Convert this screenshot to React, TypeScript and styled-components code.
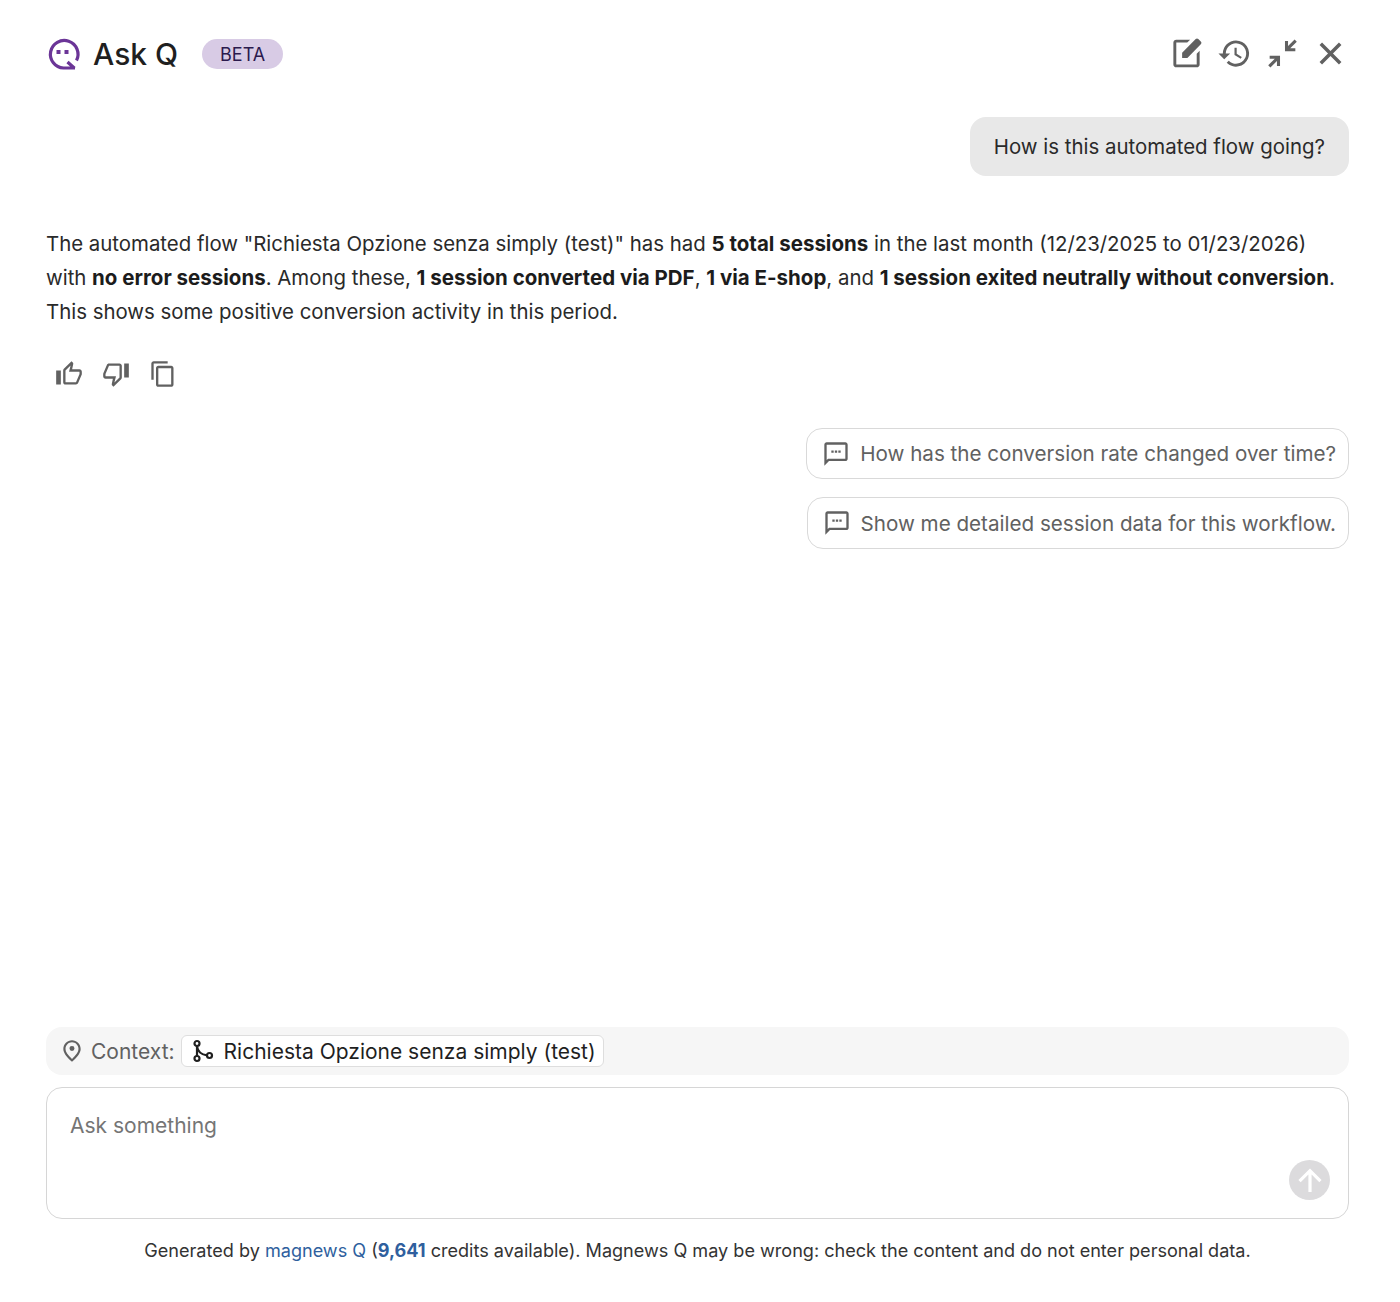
import React from 'react';
import styled, {createGlobalStyle} from 'styled-components';

const GlobalStyle = createGlobalStyle`
  html, body {
    margin: 0;
    padding: 0;
    background: #fff;
    font-family: Inter, "Liberation Sans", sans-serif;
    color: #1f1f1f;
  }
`;

const Page = styled.div`
  box-sizing: border-box;
  height: 1302px;
  padding: 24px 51px 0 46px;
  display: flex;
  flex-direction: column;
`;

const Header = styled.header`
  display: flex;
  align-items: center;
  justify-content: space-between;
  height: 60px;
`;

const Brand = styled.div`
  display: flex;
  align-items: center;
`;

const Title = styled.h1`
  margin: 0 24px 0 11px;
  font-size: 30px;
  font-weight: 500;
  line-height: 36px;
  color: #1f1f1f;
`;

const Badge = styled.span`
  display: inline-flex;
  align-items: center;
  justify-content: center;
  width: 81px;
  height: 30px;
  border-radius: 15px;
  background: #d8cbe5;
  color: #2b1a4d;
  font-size: 18px;
`;

const Tools = styled.div`
  display: flex;
  align-items: center;
  gap: 13px;
  margin: 0 1px 2px 0;
`;

const IconSlot = styled.span<{$size?: number; $color?: string}>`
  display: inline-flex;
  width: ${props => props.$size ?? 35}px;
  height: ${props => props.$size ?? 35}px;
  color: ${props => props.$color ?? '#616161'};
  flex: none;

  svg {
    width: 100%;
    height: 100%;
    display: block;
    fill: currentColor;
  }
`;

const UserRow = styled.div`
  display: flex;
  justify-content: flex-end;
  margin-top: 33px;
`;

const UserBubble = styled.div`
  background: #e8e8e8;
  border-radius: 16px;
  padding: 13px 24px;
  font-size: 20.45px;
  line-height: 33px;
  color: #2a2a2a;
`;

const Answer = styled.p`
  max-width: 1295px;
  margin: 51px 0 0;
  font-size: 20.4px;
  line-height: 34px;
  color: #2a2a2a;

  b {
    font-size: 20.5px;
    font-weight: 700;
    color: #1c1c1c;
  }
`;

const Feedback = styled.div`
  display: flex;
  gap: 19px;
  margin: 31px 0 0 9px;
`;

const Suggestions = styled.div`
  display: flex;
  flex-direction: column;
  align-items: flex-end;
  gap: 18px;
  margin-top: 40px;
`;

const Suggestion = styled.button`
  display: flex;
  align-items: center;
  gap: 10px;
  height: 51.4px;
  box-sizing: border-box;
  padding: 0 12px 0 15px;
  background: #fff;
  border: 1px solid #d9d9d9;
  border-radius: 16px;
  font: inherit;
  font-size: 20.62px;
  color: #616161;
`;

const Spacer = styled.div`
  flex: 1;
`;

const ContextBar = styled.div`
  display: flex;
  align-items: center;
  height: 48px;
  padding: 0 14px 0 13px;
  border-radius: 16px;
  background: #f6f6f6;
  font-size: 21px;
  color: #616161;
`;

const ContextLabel = styled.span`
  margin: 0 6px 0 6px;
`;

const ContextChip = styled.span`
  display: inline-flex;
  align-items: center;
  gap: 7px;
  height: 32px;
  box-sizing: border-box;
  padding: 0 7px 0 9px;
  background: #fff;
  border: 1px solid #dedede;
  border-radius: 6px;
  color: #1f1f1f;
`;

const InputBox = styled.div`
  position: relative;
  box-sizing: border-box;
  height: 132px;
  margin-top: 12px;
  padding: 22px 23px;
  border: 1px solid #d6d6d6;
  border-radius: 16px;
  font-size: 21px;
  line-height: 32px;
  color: #757575;
`;

const SendButton = styled.span`
  position: absolute;
  right: 18px;
  bottom: 18px;
  width: 41px;
  height: 40px;
  border-radius: 50%;
  background: #dcdbdd;
  color: #fff;
  display: flex;
  align-items: center;
  justify-content: center;
`;

const Footer = styled.footer`
  margin: 19px 0 40px;
  text-align: center;
  font-size: 18.08px;
  line-height: 24px;
  color: #333;

  a {
    color: #2f5f9e;
    text-decoration: none;
  }

  b {
    color: #2f5f9e;
    font-weight: 700;
  }
`;

const Icon: React.FC<{d: string; size?: number; color?: string}> = ({d, size, color}) => (
    <IconSlot $size={size} $color={color}>
        <svg viewBox="0 0 24 24"><path d={d} /></svg>
    </IconSlot>
);

// icon paths, 24 grid
const EDIT = 'M5 21.5c-1.100 0-2-.9-2-2V4.500c0-1.100.9-2 2-2h9.500l-2 2H5v15h14v-7.400l2-2v9.400c0 1.100-.9 2-2 2H5zM9 15v-3.600L18.300 2.100c.6-.6 1.200-.6 1.800 0l1.700 1.700c.6.6.6 1.200 0 1.800L12.600 15H9z';
const HISTORY = 'M13 3a9 9 0 0 0-9 9H1l3.900 3.900.1.1 4-4H6a7 7 0 1 1 2.050 4.950l-1.420 1.420A9 9 0 1 0 13 3zm-1 5v5l4.280 2.540.72-1.210-3.500-2.080V8H12z';
const COLLAPSE = 'M20.300 2.400 15.800 6.900V3.400h-2.100v7.100h7.100V8.400h-3.500L21.800 3.900 20.300 2.400zM3.200 13.500v2.100h3.500L2.200 20.100 3.700 21.600l4.500-4.500v3.500h2.100v-7.100H3.200z';
const CLOSE = 'M19.500 6.200 17.800 4.500 12 10.300 6.200 4.500 4.500 6.200 10.300 12 4.500 17.800 6.200 19.500 12 13.700 17.800 19.500 19.500 17.800 13.700 12z';
const THUMB_UP = 'M9 21h9c.83 0 1.540-.5 1.840-1.220l3.020-7.050c.09-.23.14-.47.14-.73v-2c0-1.100-.9-2-2-2h-6.310l.95-4.570.03-.32c0-.41-.17-.79-.44-1.060L14.170 1 7.580 7.590C7.220 7.950 7 8.450 7 9v10c0 1.100.9 2 2 2zM9 9l4.340-4.340L12 10h9v2l-3 7H9V9zM1 9h4v12H1z';
const THUMB_DOWN = 'M15 3H6c-.83 0-1.540.5-1.840 1.220l-3.020 7.050c-.09.23-.14.47-.14.73v2c0 1.100.9 2 2 2h6.310l-.95 4.570-.03.32c0 .41.17.79.44 1.060L9.830 23l6.590-6.590c.36-.36.58-.86.58-1.410V5c0-1.100-.9-2-2-2zm0 12-4.340 4.340L12 14H3v-2l3-7h9v10zm4-12h4v12h-4z';
const COPY = 'M16 1H4c-1.100 0-2 .9-2 2v14h2V3h12V1zm3 4H8c-1.100 0-2 .9-2 2v14c0 1.100.9 2 2 2h11c1.100 0 2-.9 2-2V7c0-1.100-.9-2-2-2zm0 16H8V7h11v14z';
const CHAT = 'M20 2H4c-1.100 0-2 .9-2 2v18l4-4h14c1.100 0 2-.9 2-2V4c0-1.100-.9-2-2-2zm0 14H5.200L4 17.200V4h16v12zM8 9h2v2H8zm3 0h2v2h-2zm3 0h2v2h-2z';
const PLACE = 'M12 12a2.300 2.300 0 1 0 0-4.600 2.300 2.300 0 0 0 0 4.600zM12 2c-4.200 0-8 3.200-8 8.200 0 3.300 2.700 7.300 8 11.800 5.300-4.500 8-8.500 8-11.800C20 5.200 16.200 2 12 2zm0 17.300c-4-3.600-6-6.600-6-9.100C6 6.600 8.700 4 12 4s6 2.600 6 6.200c0 2.500-2 5.500-6 9.100z';
const UP = 'M10.800 21V7.800L5 13.600 3.300 12 12 3.300 20.700 12 19 13.600l-5.800-5.800V21z';

const Logo: React.FC = () => (
    <IconSlot $size={36} $color="#6b3597">
        <svg viewBox="0 0 36 36">
            <path d="M30.500 24.500A13.800 13.800 0 1 0 17.500 32h11.500M21.500 26l7 6.300" fill="none" stroke="currentColor" strokeWidth="3.200" />
            <rect x="10.500" y="14" width="4" height="4" />
            <rect x="18.500" y="14" width="4" height="4" />
        </svg>
    </IconSlot>
);

const FlowIcon: React.FC = () => (
    <IconSlot $size={26} $color="#1f1f1f">
        <svg viewBox="0 0 26 26">
            <g fill="none" stroke="currentColor" strokeWidth="2.200">
                <circle cx="6" cy="5.500" r="2.500" />
                <circle cx="6" cy="20.500" r="2.500" />
                <circle cx="18.500" cy="17.500" r="2.500" />
                <path d="M6 8v10M6 8c.5 5 4 8.500 10 9.300" />
            </g>
        </svg>
    </IconSlot>
);

const App: React.FC = () => (
    <Page>
        <GlobalStyle />
        <Header>
            <Brand>
                <Logo />
                <Title>Ask Q</Title>
                <Badge>BETA</Badge>
            </Brand>
            <Tools>
                <Icon d={EDIT} />
                <Icon d={HISTORY} />
                <Icon d={COLLAPSE} />
                <Icon d={CLOSE} />
            </Tools>
        </Header>

        <UserRow>
            <UserBubble>How is this automated flow going?</UserBubble>
        </UserRow>

        <Answer>
            The automated flow "Richiesta Opzione senza simply (test)" has had <b>5 total sessions</b> in the last month (12/23/2025 to 01/23/2026) with <b>no error sessions</b>. Among these, <b>1 session converted via PDF</b>, <b>1 via E-shop</b>, and <b>1 session exited neutrally without conversion</b>. This shows some positive conversion activity in this period.
        </Answer>

        <Feedback>
            <Icon d={THUMB_UP} size={28} />
            <Icon d={THUMB_DOWN} size={28} />
            <Icon d={COPY} size={28} />
        </Feedback>

        <Suggestions>
            <Suggestion><Icon d={CHAT} size={28} />How has the conversion rate changed over time?</Suggestion>
            <Suggestion><Icon d={CHAT} size={28} />Show me detailed session data for this workflow.</Suggestion>
        </Suggestions>

        <Spacer />

        <ContextBar>
            <Icon d={PLACE} size={26} />
            <ContextLabel>Context:</ContextLabel>
            <ContextChip><FlowIcon />Richiesta Opzione senza simply (test)</ContextChip>
        </ContextBar>

        <InputBox>
            Ask something
            <SendButton><Icon d={UP} size={32} color="#fff" /></SendButton>
        </InputBox>

        <Footer>
            Generated by <a href="#q">magnews Q</a> (<b>9,641</b> credits available). Magnews Q may be wrong: check the content and do not enter personal data.
        </Footer>
    </Page>
);

export default App;
